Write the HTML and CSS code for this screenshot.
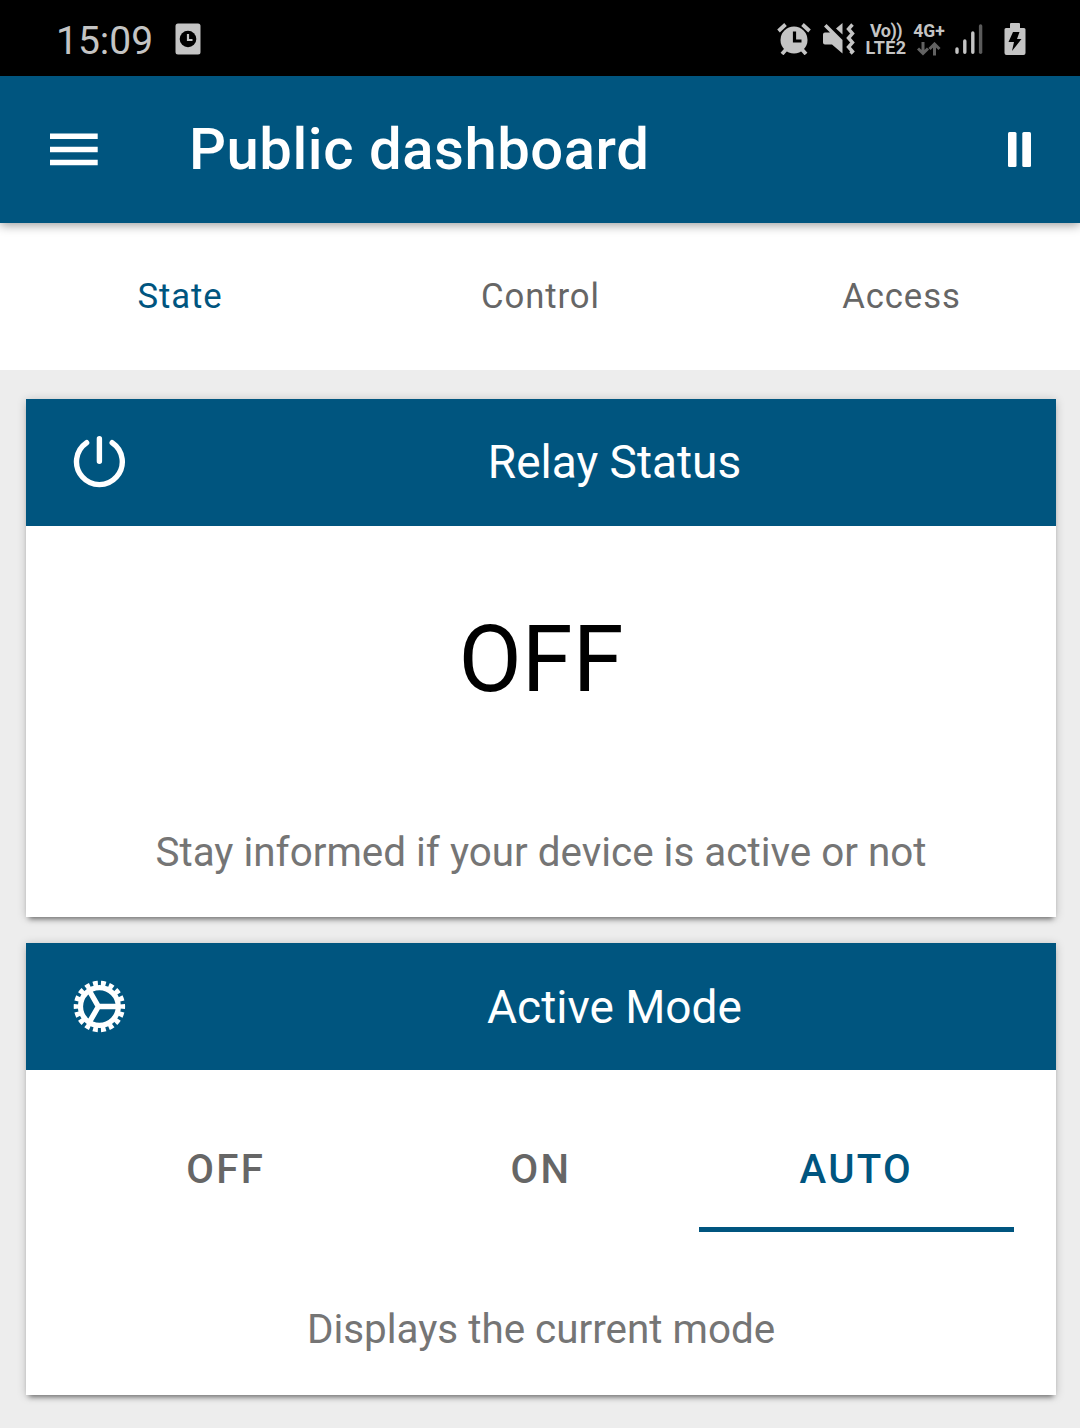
FILE: index.html
```html
<!DOCTYPE html>
<html lang="en">
<head>
<meta charset="utf-8">
<title>Public dashboard</title>
<link rel="stylesheet" href="styles.css">
</head>
<body>
<div class="status-bar">
  <span class="clock">15:09</span>
  <svg class="note-icon" width="26" height="32" viewBox="0 0 26 32"><rect x=".5" y=".5" width="25" height="31" rx="2.5" fill="#c4c4c4"/><circle cx="13" cy="16" r="8.3" fill="#000"/><path d="M13 11v6h4.5" fill="none" stroke="#c4c4c4" stroke-width="2.2"/></svg>
  <div class="indicators">
    <svg class="alarm" width="34" height="32" viewBox="0 0 34 32" fill="#c4c4c4"><circle cx="17" cy="17" r="13.5"/><path d="M1.500 8 8.500 1.500M25.500 1.500l7 6.500M5 31l4-4.500M29 31l-4-4.500" stroke="#c4c4c4" stroke-width="3.800"/><path d="M17.500 8.500V18h7" fill="none" stroke="#000" stroke-width="3.200"/></svg>
    <svg class="mute" width="34" height="32" viewBox="0 0 34 32" fill="#c4c4c4"><path d="M3 9.500H8L2 3.500 4.500 1 20.500 17V30.500L10 21.500H3Q1 21.500 1 19.500V11.500Q1 9.500 3 9.500zM14 5.500 20.500 0V11.500z"/><path d="m30.500 1.500-4 4.500 4 4.500-4 4.500 4 4.500-4 4.500 4 4.500-2 2" fill="none" stroke="#c4c4c4" stroke-width="3.400"/></svg>
    <div class="volte"><span class="vo">Vo))</span><span class="lte">LTE2</span></div>
    <div class="network"><span class="generation">4G+</span>
      <svg width="24" height="14" viewBox="0 0 24 14" fill="none" stroke="#626262" stroke-width="3"><path d="M6 0v11M1 6.500l5 5 5-5M17.500 13.500V2M12.500 7l5-5 5 5"/></svg>
    </div>
    <svg class="signal" width="28" height="32" viewBox="0 0 28 32" stroke="#c4c4c4" stroke-width="3.400" stroke-linecap="round"><path d="M2 26v3.200M9.800 18v11.200M17.800 10v19.200"/><path d="M25.600 3v26.200" stroke="#5b5b5b"/></svg>
    <svg class="battery" width="22" height="34" viewBox="0 0 22 34"><path d="M2 6h4V2q0-1 1-1h8q1 0 1 1v4h4q1.500 0 1.500 1.500V31q0 2-2 2h-17q-2 0-2-2V7.500Q.5 6 2 6z" fill="#c4c4c4"/><path d="M9 10h6.500L13 17h4.500L8 29l2-9H4.500z" fill="#000"/></svg>
  </div>
</div>
<header class="app-bar">
  <svg width="48" height="34" viewBox="0 0 48 34" fill="#fff"><path d="M0 .5h47.700V6H0zM0 13.700h47.700v5.500H0zM0 26.800h47.700v5.500H0z"/></svg>
  <h1>Public dashboard</h1>
  <svg class="pause" width="23" height="35" viewBox="0 0 23 35" fill="#fff"><rect width="8.500" height="35" rx="1.500"/><rect x="14.300" width="8.700" height="35" rx="1.500"/></svg>
</header>
<nav class="tabs"><span class="tab selected">State</span><span class="tab">Control</span><span class="tab">Access</span></nav>
<main>
  <section class="card relay">
    <div class="card-head">
      <svg width="54" height="54" viewBox="0 .5 54 54" fill="none" stroke="#fff" stroke-width="5.400" stroke-linecap="round"><path d="M27.400 3.200V25.700M14.600 7.200A22.900 22.900 0 1 0 40.200 7.200"/></svg>
      <h2>Relay Status</h2>
    </div>
    <div class="value">OFF</div>
    <p class="caption">Stay informed if your device is active or not</p>
  </section>
  <section class="card mode">
    <div class="card-head">
      <svg width="54" height="54" viewBox="-.4 .5 54 54" fill="none" stroke="#fff"><circle cx="27" cy="27" r="18.900" stroke-width="5.200"/><circle cx="27" cy="27" r="23" pathLength="36" stroke-width="5.400" stroke-dasharray="1.200 .8" stroke-dashoffset=".6"/><path d="M46 27H26L16.500 10.500M26 27l-9.500 16.500" stroke-width="5.400"/></svg>
      <h2>Active Mode</h2>
    </div>
    <div class="modes"><span>OFF</span><span>ON</span><span class="active">AUTO</span></div>
    <p class="caption">Displays the current mode</p>
  </section>
</main>
</body>
</html>
```
FILE: styles.css
```css
* { box-sizing: border-box; }
body { margin: 0; height: 1428px; overflow: hidden; background: #ededed; font-family: Roboto, sans-serif; color: #000; }
svg { display: block; flex: none; }
h1, h2, p { margin: 0; }
.status-bar { height: 76px; background: #000; color: #c4c4c4; display: flex; align-items: center; padding: 2px 54px 0 56px; }
.clock { font-size: 39px; line-height: 48px; width: 119px; padding-top: 3px; }
.indicators { margin-left: auto; display: flex; align-items: center; }
.mute { margin-left: 11px; }
.volte { width: 42px; margin-left: 9px; display: flex; flex-direction: column; align-items: center; font-weight: 700; }
.vo, .lte { font-size: 18px; line-height: 17px; }
.vo { letter-spacing: -0.5px; }
.lte { letter-spacing: 0.4px; }
.network { width: 32px; margin-left: 6px; display: flex; flex-direction: column; align-items: center; gap: 2px; font-weight: 700; }
.generation { font-size: 17.5px; line-height: 18px; }
.signal { margin-left: 10px; }
.battery { margin-left: 21px; }
.app-bar { position: relative; height: 147px; background: #00557f; color: #fff; display: flex; align-items: center; padding: 0 49px 0 50px; box-shadow: 0 2px 10px rgba(0,0,0,.4); }
h1 { margin: 0 0 2px 91px; font-size: 58px; font-weight: 500; line-height: 68px; letter-spacing: 0.55px; }
.pause { margin-left: auto; }
.tabs { height: 147px; background: #fff; display: grid; grid-template-columns: 360px 361px 1fr; align-items: center; text-align: center; font-size: 34.7px; letter-spacing: 0.9px; color: #666; padding: 0 0 2px; }
.tab.selected { color: #00557f; }
main { padding: 29px 24px 0 26px; display: flex; flex-direction: column; gap: 26px; }
.tab:last-child { padding-left: 2px; }
.card { background: #fff; text-align: center; box-shadow: 0 5px 5px -3px rgba(0,0,0,.45), 0 1px 9px rgba(0,0,0,.2); }
.relay { height: 518px; }
.mode { height: 452px; }
.card-head { height: 127px; background: #00557f; color: #fff; display: flex; align-items: center; padding-left: 46px; }
h2 { flex: 1; margin-left: 47px; font-size: 46px; font-weight: 400; line-height: 54px; }
.relay h2 { margin-bottom: 2px; }
.value { font-size: 92px; line-height: 108px; padding-top: 80px; }
.caption { font-size: 40.4px; line-height: 48px; color: #757575; }
.relay .caption { margin-top: 115px; }
.modes { display: grid; grid-template-columns: repeat(3, 1fr); margin: 36px 42px 0; height: 126px; font-size: 40.2px; font-weight: 500; letter-spacing: 2.3px; color: #666; line-height: 127px; }
.modes .active { height: 126px; color: #00557f; border-bottom: 5px solid #00557f; }
.mode .caption { margin-top: 74px; }
```
